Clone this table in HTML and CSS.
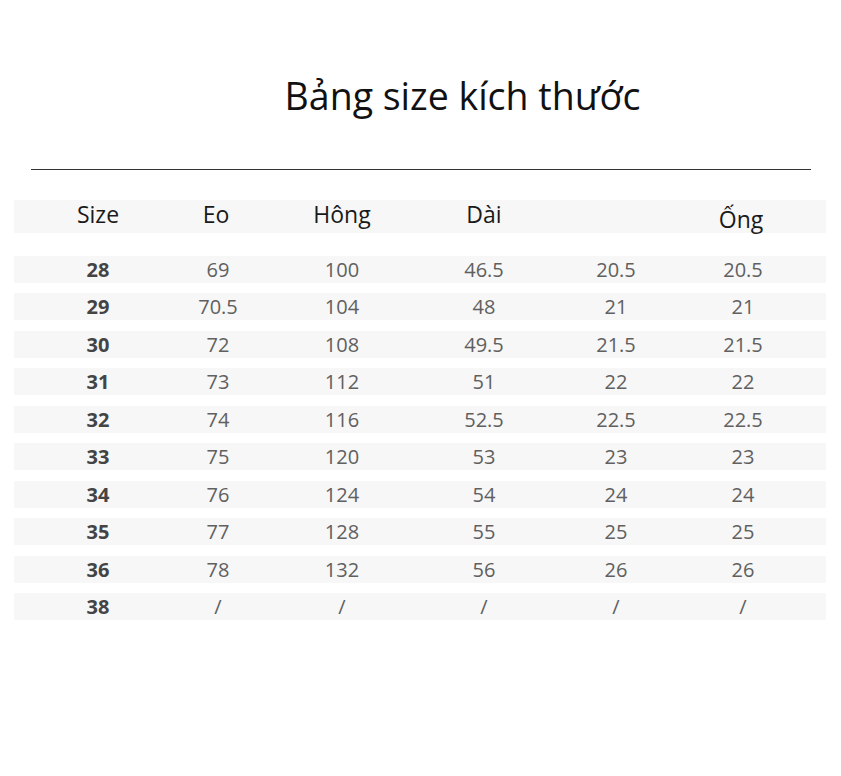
FILE: index.html
```html
<!DOCTYPE html>
<html lang="vi">
<head>
<meta charset="utf-8">
<title>Bảng size kích thước</title>
<link rel="stylesheet" href="styles.css">
</head>
<body>
<div class="page">
  <h1 class="title">Bảng size kích thước</h1>
  <div class="rule"></div>
  <div class="table">
    <div class="row head">
      <div class="cell">Size</div>
      <div class="cell eo">Eo</div>
      <div class="cell">Hông</div>
      <div class="cell">Dài</div>
      <div class="cell"></div>
      <div class="cell low">Ống</div>
    </div>
    <div class="body">
      <div class="row"><div class="cell sz">28</div><div class="cell">69</div><div class="cell">100</div><div class="cell">46.5</div><div class="cell">20.5</div><div class="cell">20.5</div></div>
      <div class="row"><div class="cell sz">29</div><div class="cell">70.5</div><div class="cell">104</div><div class="cell">48</div><div class="cell">21</div><div class="cell">21</div></div>
      <div class="row"><div class="cell sz">30</div><div class="cell">72</div><div class="cell">108</div><div class="cell">49.5</div><div class="cell">21.5</div><div class="cell">21.5</div></div>
      <div class="row"><div class="cell sz">31</div><div class="cell">73</div><div class="cell">112</div><div class="cell">51</div><div class="cell">22</div><div class="cell">22</div></div>
      <div class="row"><div class="cell sz">32</div><div class="cell">74</div><div class="cell">116</div><div class="cell">52.5</div><div class="cell">22.5</div><div class="cell">22.5</div></div>
      <div class="row"><div class="cell sz">33</div><div class="cell">75</div><div class="cell">120</div><div class="cell">53</div><div class="cell">23</div><div class="cell">23</div></div>
      <div class="row"><div class="cell sz">34</div><div class="cell">76</div><div class="cell">124</div><div class="cell">54</div><div class="cell">24</div><div class="cell">24</div></div>
      <div class="row"><div class="cell sz">35</div><div class="cell">77</div><div class="cell">128</div><div class="cell">55</div><div class="cell">25</div><div class="cell">25</div></div>
      <div class="row"><div class="cell sz">36</div><div class="cell">78</div><div class="cell">132</div><div class="cell">56</div><div class="cell">26</div><div class="cell">26</div></div>
      <div class="row"><div class="cell sz">38</div><div class="cell">/</div><div class="cell">/</div><div class="cell">/</div><div class="cell">/</div><div class="cell">/</div></div>
    </div>
  </div>
</div>
</body>
</html>
```

FILE: styles.css
```css
html, body {
  margin: 0;
  padding: 0;
  background: #ffffff;
}

.page {
  width: 841px;
  font-family: "Open Sans", "Noto Sans", sans-serif;
}

.title {
  margin: 0;
  padding: 70px 0 0 84px;
  font-size: 37.5px;
  font-weight: 400;
  line-height: 52px;
  color: #111111;
  text-align: center;
}

.rule {
  height: 1px;
  margin: 47px 30px 0 31px;
  background: #333333;
}

.table {
  width: 812px;
  margin: 30px 0 0 14px;
}

.row {
  display: grid;
  grid-template-columns: 120px 120px 128px 156px 108px 146px;
  padding: 0 10px 0 24px;
  height: 27px;
  background: #f7f7f7;
  align-items: center;
}

.cell {
  text-align: center;
  font-size: 20px;
  line-height: 27px;
  color: #606060;
}

.head {
  height: 33px;
  align-items: start;
}

.head .cell {
  font-size: 23px;
  line-height: 29px;
  color: #1a1a1a;
}

.head .eo {
  padding-right: 4px;
}

.head .low {
  padding: 5px 4px 0 0;
}

.body {
  display: flex;
  flex-direction: column;
  gap: 10.45px;
  margin-top: 23px;
}

.sz {
  font-weight: 700;
  color: #444444;
}
```
